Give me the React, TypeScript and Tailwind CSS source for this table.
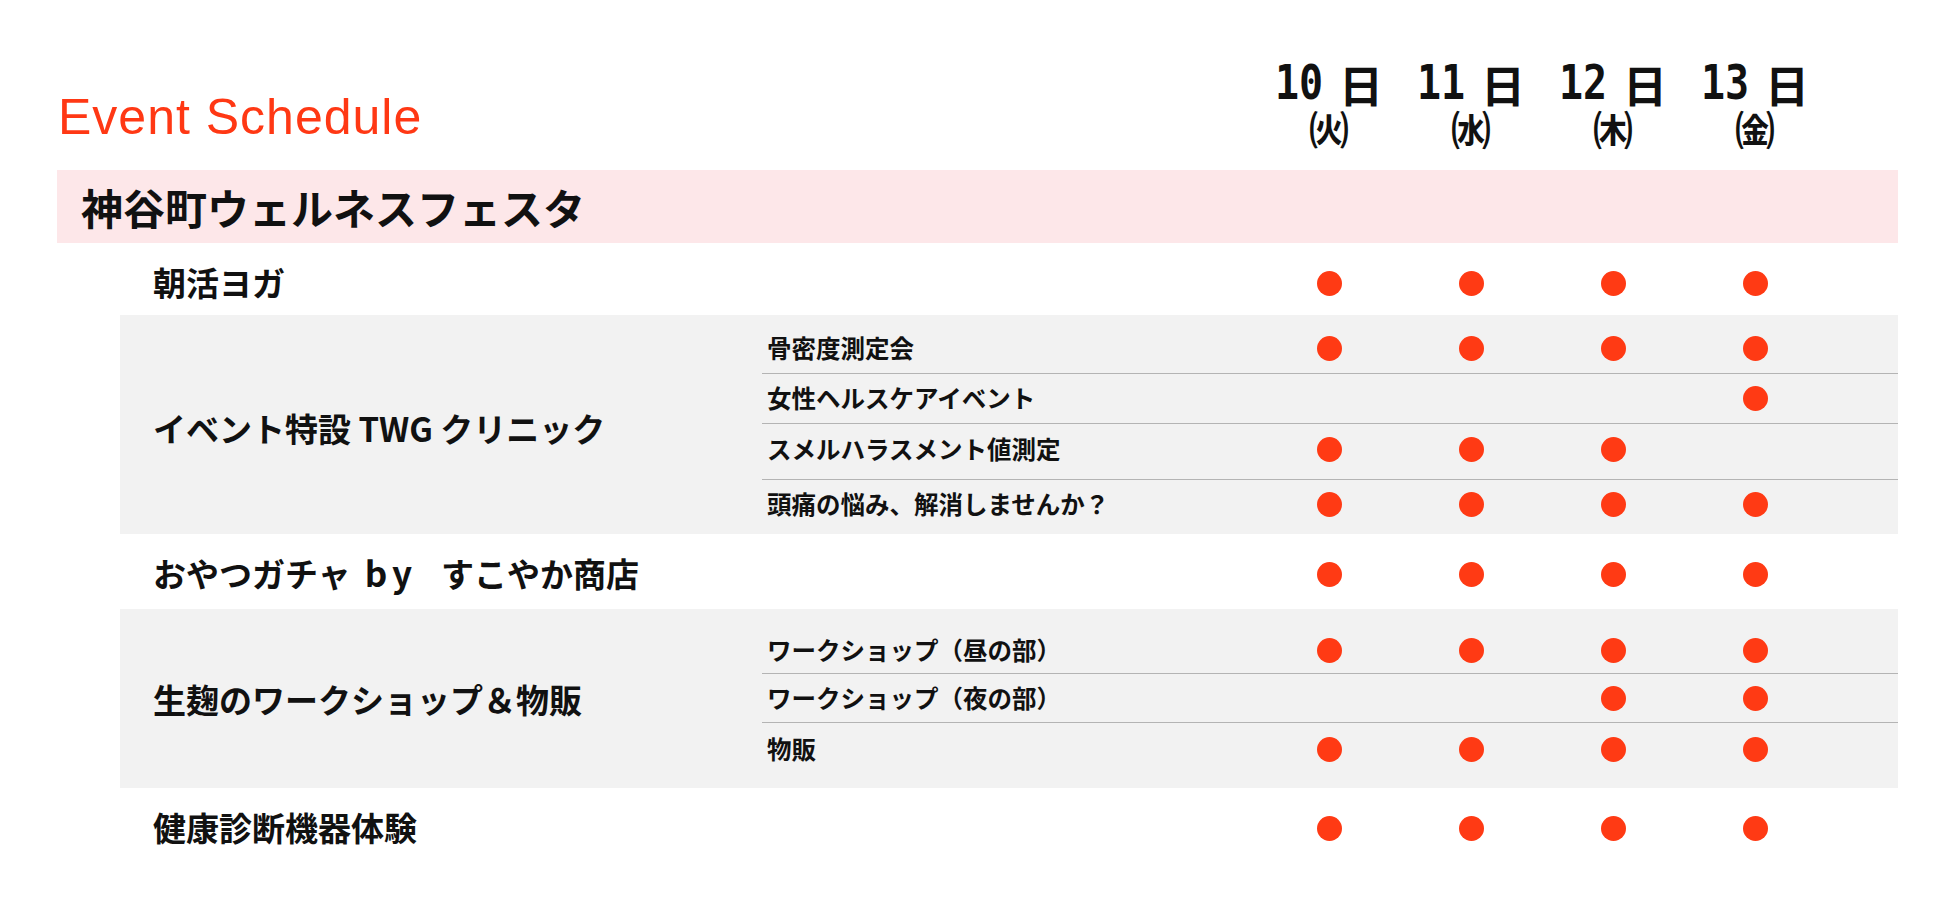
import type { ReactNode } from "react";
import clsx from "clsx";

// 日付ヘッダー
const DAYS = [
  { day: "10", week: "㈫" },
  { day: "11", week: "㈬" },
  { day: "12", week: "㈭" },
  { day: "13", week: "㈮" },
];

type SubRow = {
  label?: string;
  on: boolean[];
  className: string;
};

type Group = {
  id: string;
  title: ReactNode;
  gray: boolean;
  className: string;
  labelClass: string;
  subsClass: string;
  subs: SubRow[];
};

const ALL = [true, true, true, true];

const GROUPS: Group[] = [
  {
    id: "yoga",
    title: "朝活ヨガ",
    gray: false,
    className: "h-[72px]",
    labelClass: "pt-[8px]",
    subsClass: "pt-[8px]",
    subs: [{ on: ALL, className: "flex-1" }],
  },
  {
    id: "clinic",
    title: "イベント特設 TWG クリニック",
    gray: true,
    className: "",
    labelClass: "pt-[8px]",
    subsClass: "pt-[8px] pb-[5px]",
    subs: [
      { label: "骨密度測定会", on: ALL, className: "h-[50px]" },
      { label: "女性ヘルスケアイベント", on: [false, false, false, true], className: "h-[50px]" },
      { label: "スメルハラスメント値測定", on: [true, true, true, false], className: "h-[56px] pb-[4px]" },
      { label: "頭痛の悩み、解消しませんか？", on: ALL, className: "h-[50px]" },
    ],
  },
  {
    id: "gacha",
    title: (
      <>
        おやつガチャ
        <span className="ml-[14px] mr-[24px] text-[35px] leading-none tracking-[5px]">by</span>
        すこやか商店
      </>
    ),
    gray: false,
    className: "h-[75px]",
    labelClass: "pt-[5px]",
    subsClass: "pt-[5px]",
    subs: [{ on: ALL, className: "flex-1" }],
  },
  {
    id: "koji",
    title: "生麹のワークショップ＆物販",
    gray: true,
    className: "",
    labelClass: "pt-[3px]",
    subsClass: "pt-[18px] pb-[12px]",
    subs: [
      { label: "ワークショップ（昼の部）", on: ALL, className: "h-[46px]" },
      { label: "ワークショップ（夜の部）", on: [false, false, true, true], className: "h-[49px]" },
      { label: "物販", on: ALL, className: "h-[54px]" },
    ],
  },
  {
    id: "health",
    title: "健康診断機器体験",
    gray: false,
    className: "h-[80px]",
    labelClass: "",
    subsClass: "",
    subs: [{ on: ALL, className: "flex-1" }],
  },
];

function Dot() {
  return <span className="block w-[25px] h-[25px] rounded-full bg-[#ff3a14]" />;
}

function ScheduleGroup({ group }: { group: Group }) {
  return (
    <div className={clsx("flex", group.gray && "bg-[#f2f2f2]", group.className)}>
      <div
        className={clsx(
          "w-[642px] shrink-0 pl-[33px] flex items-center text-[33px] font-bold text-[#111]",
          group.labelClass
        )}
      >
        <span>{group.title}</span>
      </div>
      <div className={clsx("flex-1 flex flex-col", group.subsClass)}>
        {group.subs.map((sub, i) => (
          <div
            key={i}
            className={clsx(
              "flex items-center",
              i > 0 && "border-t border-[#b4b4b4]",
              sub.className
            )}
          >
            <div className="w-[496px] shrink-0 pl-[5px] text-[24.5px] font-bold text-[#111]">
              {sub.label}
            </div>
            {sub.on.map((on, j) => (
              <div key={j} className="w-[142px] shrink-0 flex justify-center">
                {on && <Dot />}
              </div>
            ))}
          </div>
        ))}
      </div>
    </div>
  );
}

export default function App() {
  return (
    <main className="w-[1948px] h-[911px] bg-white font-['Noto_Sans_CJK_JP',sans-serif] overflow-hidden">
      {/* ヘッダー */}
      <header className="flex h-[170px]">
        <div className="w-[1258px] shrink-0 pl-[58px] pt-[92px]">
          <h1 className="text-[50px] leading-[50px] tracking-[1px] font-['Liberation_Sans',sans-serif] text-[#ff3814]">
            Event Schedule
          </h1>
        </div>
        {DAYS.map((d) => (
          <div key={d.day} className="w-[142px] shrink-0 flex flex-col items-center pt-[60px] text-[#111]">
            <div className="flex items-end h-[46px] font-bold">
              <span className="inline-block text-[40px] leading-[40px] scale-y-[1.22] origin-bottom font-['DejaVu_Sans_Mono',monospace]">
                {d.day}
              </span>
              <span className="ml-[16px] text-[44px] leading-[44px]">日</span>
            </div>
            <div className="text-[40px] leading-[44px] font-bold">{d.week}</div>
          </div>
        ))}
      </header>

      {/* イベント名 */}
      <div className="ml-[57px] w-[1841px] h-[73px] bg-[#fde7e9] flex items-center pl-[24px] text-[42px] font-bold text-[#111]">
        神谷町ウェルネスフェスタ
      </div>

      {/* スケジュール表 */}
      <div className="ml-[120px] w-[1778px]">
        {GROUPS.map((g) => (
          <ScheduleGroup key={g.id} group={g} />
        ))}
      </div>
    </main>
  );
}
